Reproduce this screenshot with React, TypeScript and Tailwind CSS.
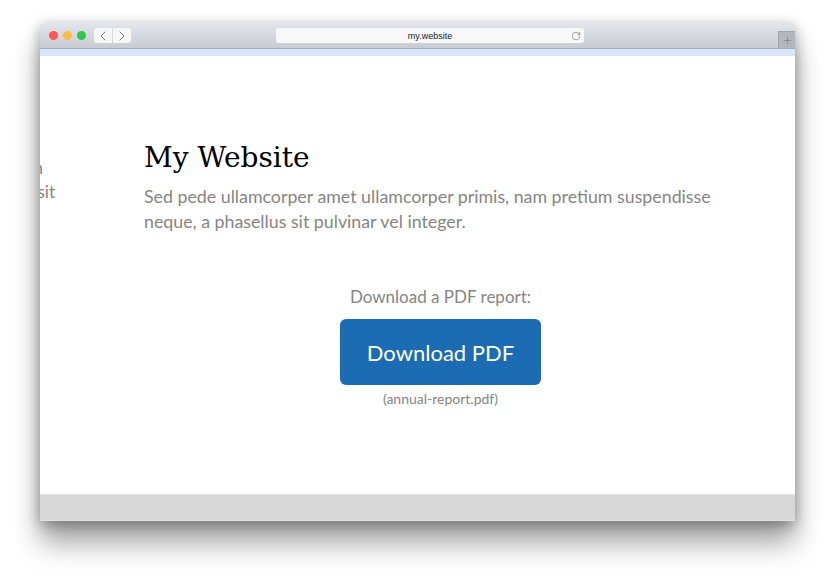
import React from 'react';
import { ChevronLeft, ChevronRight, RotateCw, Plus } from 'lucide-react';

const bodyFont = "font-['Lato','Noto_Sans',sans-serif]";

const App: React.FC = () => {
  return (
    <div className="w-[835px] h-[578px] bg-white overflow-hidden pt-[23px] pl-[40px]">
      {/* Browser window */}
      <div className="w-[755px] h-[498px] flex flex-col rounded-t-[4px] shadow-[0_22px_28px_rgba(0,0,0,0.36),0_3px_14px_rgba(0,0,0,0.32)]">
        {/* Title bar */}
        <div className="h-[26px] shrink-0 flex items-start bg-gradient-to-b from-[#e2e5ea] to-[#c8cbd2] border-b border-[#a9acb3] rounded-t-[4px]">
          <div className="flex gap-[5px] pl-[9px] pt-[8px]">
            <span className="w-[9px] h-[9px] rounded-full bg-[#fc5753]" />
            <span className="w-[9px] h-[9px] rounded-full bg-[#fdbc40]" />
            <span className="w-[9px] h-[9px] rounded-full bg-[#33c748]" />
          </div>
          <div className="flex gap-px ml-[8px] pt-[5px]">
            <div className="w-[18px] h-[15px] rounded-l-[3px] bg-[#f6f6f7] flex items-center justify-center">
              <ChevronLeft size={16} strokeWidth={1.4} className="text-[#66686c]" />
            </div>
            <div className="w-[18px] h-[15px] rounded-r-[3px] bg-[#f6f6f7] flex items-center justify-center">
              <ChevronRight size={16} strokeWidth={1.4} className="text-[#66686c]" />
            </div>
          </div>
          <div className="relative w-[308px] h-[15px] ml-[145px] mt-[5px] rounded-[3px] bg-[#f8f8f9] flex items-center justify-center">
            <span className="font-['Liberation_Sans',sans-serif] text-[9px] leading-none text-[#222] pt-px">my.website</span>
            <RotateCw size={10} strokeWidth={1.4} className="absolute right-[3px] top-[3px] text-[#66686c]" />
          </div>
          <div className="ml-auto mt-[8px] w-[17px] h-[17px] bg-[#b3b6bc] border-l border-t border-[#a2a5ab] flex items-center justify-center">
            <Plus size={11} strokeWidth={1.2} className="text-[#6d7075]" />
          </div>
        </div>
        <div className="h-[7px] shrink-0 bg-[#d5e7f8]" />

        {/* Page */}
        <div className={`flex-1 flex overflow-hidden bg-white ${bodyFont}`}>
          {/* previous slide, cut off at the window edge */}
          <div className="w-[104px] shrink-0 pt-[100px] text-[17px] leading-[24px] text-[#858585] whitespace-nowrap flex flex-col items-end">
            <p className="pr-[101px]">Aliquam dolor in</p>
            <p className="pr-[89px]">ipsum dolor sit</p>
          </div>
          <div className="flex-1 pt-[83px]">
            <h1 className="font-['DejaVu_Serif','Liberation_Serif',serif] text-[28px] leading-[38px] text-black">My Website</h1>
            <p className="mt-[7px] w-[590px] text-[17.8px] leading-[25px] text-[#858585]">
              Sed pede ullamcorper amet ullamcorper primis, nam pretium suspendisse neque, a phasellus sit pulvinar vel integer.
            </p>
            <div className="mt-[51px] w-[593px] flex flex-col items-center">
              <p className="text-[17px] leading-[24px] text-[#858585]">Download a PDF report:</p>
              <a className="mt-[10px] w-[201px] h-[66px] rounded-[6px] bg-[#1c6cb3] text-white text-[22px] flex items-center justify-center">
                Download PDF
              </a>
              <p className="mt-[5px] text-[14px] leading-[18px] text-[#858585]">(annual-report.pdf)</p>
            </div>
          </div>
        </div>

        {/* Footer strip */}
        <div className="h-[27px] shrink-0 bg-[#d7d7d7] border-t border-b border-[#e2e2e2]" />
      </div>
    </div>
  );
};

export default App;
